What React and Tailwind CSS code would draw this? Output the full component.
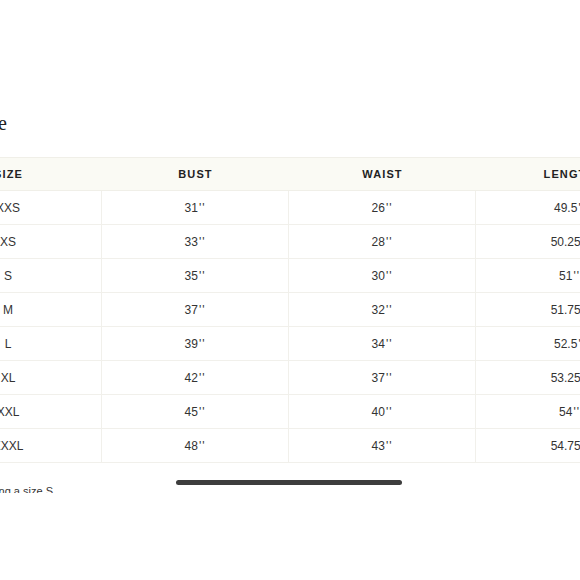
import React from "react";

const rows = [
  ["XXS", "31", "26", "49.5"],
  ["XS", "33", "28", "50.25"],
  ["S", "35", "30", "51"],
  ["M", "37", "32", "51.75"],
  ["L", "39", "34", "52.5"],
  ["XL", "42", "37", "53.25"],
  ["XXL", "45", "40", "54"],
  ["XXXL", "48", "43", "54.75"],
];

export default function App() {
  return (
    <div
      className="relative w-[580px] h-[580px] bg-white overflow-hidden"
      style={{ fontFamily: '"Liberation Sans", Arial, sans-serif' }}
    >
      <div className="h-[493px] overflow-hidden">
        <div className="h-[110px]" />
        <div className="flex justify-end w-[7px] h-[26px] items-center">
          <span
            className="whitespace-nowrap text-[20px] text-[#222] shrink-0"
            style={{ fontFamily: '"Liberation Serif", serif' }}
          >
            Size Guide
          </span>
        </div>
        <div className="h-[21px]" />
        <div className="overflow-hidden w-[580px]">
          <div className="ml-[-85px] w-[748px]">
            <div className="grid grid-cols-4 h-[34px] bg-[#fafaf4] border-y border-[#f0efe8] items-center text-[11px] font-semibold tracking-[0.1em] text-[#222]">
              <div className="text-center">SIZE</div>
              <div className="text-center">BUST</div>
              <div className="text-center">WAIST</div>
              <div className="text-center">LENGTH</div>
            </div>
            {rows.map((r, i) => (
              <div
                key={i}
                className="grid grid-cols-4 h-[34px] border-b border-[#f1f0eb] text-[12px] text-[#333]"
              >
                {r.map((c, j) => (
                  <div
                    key={j}
                    className={
                      "flex items-center justify-center " +
                      (j < 3 ? "border-r border-[#f1f0eb]" : "")
                    }
                  >
                    {j === 0 ? (
                      c
                    ) : (
                      <span>
                        {c}
                        <span className="tracking-[1px] ml-[1px]">''</span>
                      </span>
                    )}
                  </div>
                ))}
              </div>
            ))}
          </div>
        </div>
        <div className="h-[21px]" />
        <div className="flex justify-end w-[53px]">
          <span className="whitespace-nowrap text-[11px] text-[#333] shrink-0 leading-[14px]">
            Model is wearing a size S
          </span>
        </div>
      </div>
      <div className="absolute left-[176px] top-[480px] w-[226px] h-[5px] rounded-full bg-[#3d3d3d]" />
    </div>
  );
}
